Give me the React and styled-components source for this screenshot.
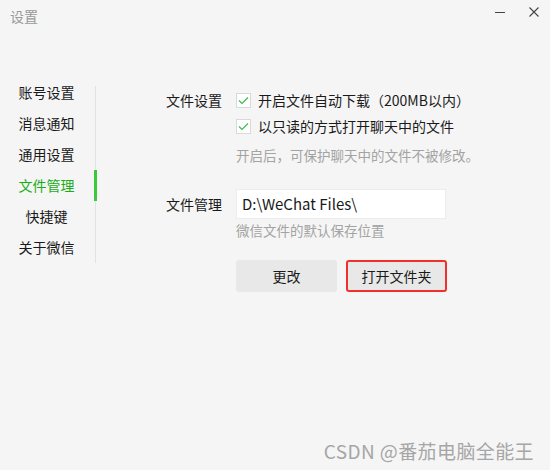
import React from 'react';
import styled, { createGlobalStyle } from 'styled-components';

const Global = createGlobalStyle`
  html, body {
    margin: 0;
    padding: 0;
    background: #f5f5f5;
  }
  * {
    box-sizing: border-box;
  }
`;

const Window = styled.div`
  width: 550px;
  height: 470px;
  background: #f5f5f5;
  display: flex;
  flex-direction: column;
  font-family: "Noto Sans CJK SC", "Noto Sans", sans-serif;
  color: #1a1a1a;
  overflow: hidden;
`;

const TitleBar = styled.div`
  height: 32px;
  display: flex;
  align-items: center;
  justify-content: space-between;
  padding: 0 11px 0 10px;
`;

const Title = styled.div`
  font-size: 14px;
  color: #999;
`;

const Controls = styled.div`
  display: flex;
  align-items: center;
  gap: 24px;
  margin-bottom: 8px;
`;

const IconBtn = styled.div`
  width: 10px;
  height: 10px;
  display: flex;
  align-items: center;
  justify-content: center;
`;

const Main = styled.div`
  flex: 1;
  display: flex;
  min-height: 0;
`;

const Nav = styled.div`
  width: 97px;
  margin-top: 45px;
  align-self: flex-start;
  display: flex;
  flex-direction: column;
  background: linear-gradient(#e2e2e2, #e2e2e2) no-repeat;
  background-position: 95px 9px;
  background-size: 1px calc(100% - 9px);
`;

const NavItem = styled.div`
  height: 31px;
  line-height: 31px;
  width: 97px;
  padding-right: 1px;
  text-align: center;
  font-size: 14px;
  color: ${p => (p.active ? '#1aad19' : '#1a1a1a')};
  border-right: 3px solid ${p => (p.active ? '#3bc83b' : 'transparent')};
`;

const Content = styled.div`
  flex: 1;
  display: flex;
  flex-direction: column;
  padding: 55px 16px 6px 69px;
`;

const Section = styled.div`
  display: grid;
  grid-template-columns: 70px 1fr;
  margin-top: ${p => p.gap || 0}px;
`;

const Label = styled.div`
  font-size: 14px;
  line-height: ${p => p.h || 26}px;
`;

const Column = styled.div`
  display: flex;
  flex-direction: column;
`;

const CheckRow = styled.label`
  display: flex;
  align-items: center;
  gap: 7px;
  height: 26px;
  font-size: 14px;
`;

const Box = styled.span`
  width: 15px;
  height: 15px;
  background: #fff;
  border: 1px solid #d9d9d9;
  display: flex;
  align-items: center;
  justify-content: center;
`;

const Hint = styled.div`
  font-size: 13.5px;
  color: #a3a3a3;
  line-height: ${p => p.h || 24}px;
  margin-top: ${p => p.top || 0}px;
`;

const PathInput = styled.div`
  width: 210px;
  height: 30px;
  background: #fff;
  border: 1px solid #ececec;
  font-size: 15px;
  line-height: 28px;
  padding-left: 5px;
  color: #1a1a1a;
`;

const Buttons = styled.div`
  display: flex;
  gap: 9px;
  margin-top: 19px;
`;

const Button = styled.div`
  width: 101px;
  height: 32px;
  border-radius: 3px;
  background: #e8e8e8;
  font-size: 14px;
  display: flex;
  align-items: center;
  justify-content: center;
  color: #1a1a1a;
  border: 2px solid ${p => (p.marked ? '#f0302a' : 'transparent')};
`;

const Footer = styled.div`
  margin-top: auto;
  display: flex;
  justify-content: flex-end;
  font-size: 19px;
  letter-spacing: 0.4px;
  color: #a6a6a6;
`;

const Check = () => (
  <svg width="11" height="9" viewBox="0 0 11 9">
    <path d="M1 4.5 L4 7.5 L10 1.5" fill="none" stroke="#3dbb4e" strokeWidth="1.2" />
  </svg>
);

const navItems = ['账号设置', '消息通知', '通用设置', '文件管理', '快捷键', '关于微信'];

export default function App() {
  return (
    <Window>
      <Global />
      <TitleBar>
        <Title>设置</Title>
        <Controls>
          <IconBtn>
            <svg width="10" height="10" viewBox="0 0 10 10">
              <path d="M0 5.5 H10" stroke="#444" strokeWidth="1" />
            </svg>
          </IconBtn>
          <IconBtn>
            <svg width="10" height="10" viewBox="0 0 10 10">
              <path d="M0.5 0.5 L9.5 9.5 M9.5 0.5 L0.5 9.5" stroke="#444" strokeWidth="1.1" />
            </svg>
          </IconBtn>
        </Controls>
      </TitleBar>
      <Main>
        <Nav>
          {navItems.map(n => (
            <NavItem key={n} active={n === '文件管理'}>{n}</NavItem>
          ))}
        </Nav>
        <Content>
          <Section>
            <Label>文件设置</Label>
            <Column>
              <CheckRow><Box><Check /></Box>开启文件自动下载（200MB以内）</CheckRow>
              <CheckRow><Box><Check /></Box>以只读的方式打开聊天中的文件</CheckRow>
              <Hint top={4}>开启后，可保护聊天中的文件不被修改。</Hint>
            </Column>
          </Section>
          <Section gap={22}>
            <Label h={30}>文件管理</Label>
            <Column>
              <PathInput>D:\WeChat Files\</PathInput>
              <Hint h={22}>微信文件的默认保存位置</Hint>
              <Buttons>
                <Button>更改</Button>
                <Button marked>打开文件夹</Button>
              </Buttons>
            </Column>
          </Section>
          <Footer>CSDN @番茄电脑全能王</Footer>
        </Content>
      </Main>
    </Window>
  );
}
